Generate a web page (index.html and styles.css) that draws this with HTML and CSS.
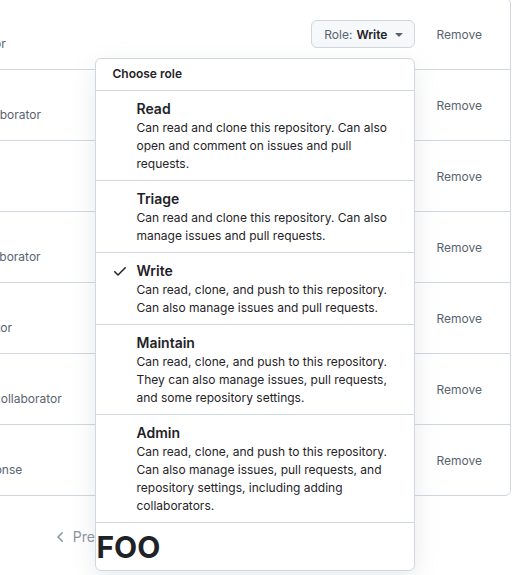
FILE: index.html
```html
<!DOCTYPE html>
<html lang="en">
<head>
    <meta charset="UTF-8">
    <meta name="viewport" content="width=device-width, initial-scale=1.0">
    <title>Manage access</title>
    <link rel="stylesheet" href="styles.css">
</head>
<body>
    <div class="page">
        <ul class="member-list">
            <li class="member-row">
                <div class="member-info">
                    <span class="avatar"></span>
                    <div class="member-text">
                        <span class="member-name">octo</span>
                        <span class="member-sub">Collaborator</span>
                    </div>
                </div>
                <div class="member-actions">
                    <div class="role-menu">
                        <button class="role-btn">
                            <span class="role-label">Role:</span>
                            <span class="role-value">Write</span>
                            <svg class="caret" width="16" height="16" viewBox="0 0 16 16"><path d="m4.427 7.427 3.396 3.396a.25.25 0 0 0 .354 0l3.396-3.396A.25.25 0 0 0 11.396 7H4.604a.25.25 0 0 0-.177.427Z"/></svg>
                        </button>

                        <div class="select-menu">
                            <div class="select-header">Choose role</div>
                            <div class="select-item">
                                <span class="check"></span>
                                <div>
                                    <div class="item-title">Read</div>
                                    <div class="item-desc">Can read and clone this repository. Can also open and comment on issues and pull requests.</div>
                                </div>
                            </div>
                            <div class="select-item">
                                <span class="check"></span>
                                <div>
                                    <div class="item-title">Triage</div>
                                    <div class="item-desc">Can read and clone this repository. Can also manage issues and pull requests.</div>
                                </div>
                            </div>
                            <div class="select-item">
                                <span class="check">
                                    <svg width="16" height="16" viewBox="0 0 16 16"><path d="M13.78 4.22a.75.75 0 0 1 0 1.06l-7.25 7.25a.75.75 0 0 1-1.06 0L2.220 9.28a.751.751 0 0 1 .018-1.042.751.751 0 0 1 1.042-.018L6 10.94l6.72-6.720a.75.75 0 0 1 1.06 0Z"/></svg>
                                </span>
                                <div>
                                    <div class="item-title">Write</div>
                                    <div class="item-desc">Can read, clone, and push to this repository. Can also manage issues and pull requests.</div>
                                </div>
                            </div>
                            <div class="select-item">
                                <span class="check"></span>
                                <div>
                                    <div class="item-title">Maintain</div>
                                    <div class="item-desc">Can read, clone, and push to this repository. They can also manage issues, pull requests, and some repository settings.</div>
                                </div>
                            </div>
                            <div class="select-item">
                                <span class="check"></span>
                                <div>
                                    <div class="item-title">Admin</div>
                                    <div class="item-desc">Can read, clone, and push to this repository. Can also manage issues, pull requests, and repository settings, including adding collaborators.</div>
                                </div>
                            </div>
                            <div class="select-footer">FOO</div>
                        </div>
                    </div>
                    <button class="remove-btn">Remove</button>
                </div>
            </li>
            <li class="member-row">
                <div class="member-info">
                    <span class="avatar"></span>
                    <div class="member-text">
                        <span class="member-name">hubot</span>
                        <span class="member-sub">Direct collaborator</span>
                    </div>
                </div>
                <div class="member-actions">
                    <button class="role-btn"><span class="role-label">Role:</span> <span class="role-value">Read</span></button>
                    <button class="remove-btn">Remove</button>
                </div>
            </li>
            <li class="member-row">
                <div class="member-info">
                    <span class="avatar"></span>
                    <div class="member-text">
                        <span class="member-name">monalisa</span>
                        <span class="member-sub"></span>
                    </div>
                </div>
                <div class="member-actions">
                    <button class="role-btn"><span class="role-label">Role:</span> <span class="role-value">Read</span></button>
                    <button class="remove-btn">Remove</button>
                </div>
            </li>
            <li class="member-row">
                <div class="member-info">
                    <span class="avatar"></span>
                    <div class="member-text">
                        <span class="member-name">mona</span>
                        <span class="member-sub">Guest collaborator</span>
                    </div>
                </div>
                <div class="member-actions">
                    <button class="role-btn"><span class="role-label">Role:</span> <span class="role-value">Read</span></button>
                    <button class="remove-btn">Remove</button>
                </div>
            </li>
            <li class="member-row">
                <div class="member-info">
                    <span class="avatar"></span>
                    <div class="member-text">
                        <span class="member-name">defunkt</span>
                        <span class="member-sub">Administrator</span>
                    </div>
                </div>
                <div class="member-actions">
                    <button class="role-btn"><span class="role-label">Role:</span> <span class="role-value">Admin</span></button>
                    <button class="remove-btn">Remove</button>
                </div>
            </li>
            <li class="member-row">
                <div class="member-info">
                    <span class="avatar"></span>
                    <div class="member-text">
                        <span class="member-name">pjhyett</span>
                        <span class="member-sub">Accepted collaborator</span>
                    </div>
                </div>
                <div class="member-actions">
                    <button class="role-btn"><span class="role-label">Role:</span> <span class="role-value">Write</span></button>
                    <button class="remove-btn">Remove</button>
                </div>
            </li>
            <li class="member-row">
                <div class="member-info">
                    <span class="avatar"></span>
                    <div class="member-text">
                        <span class="member-name">mojombo</span>
                        <span class="member-sub">Email response</span>
                    </div>
                </div>
                <div class="member-actions">
                    <button class="role-btn"><span class="role-label">Role:</span> <span class="role-value">Read</span></button>
                    <button class="remove-btn">Remove</button>
                </div>
            </li>
        </ul>

        <nav class="pagination">
            <span class="page-link disabled">
                <svg width="16" height="16" viewBox="0 0 16 16"><path d="M9.78 12.78a.75.75 0 0 1-1.06 0L4.47 8.53a.75.75 0 0 1 0-1.06l4.25-4.25a.751.751 0 0 1 1.042.018.751.751 0 0 1 .018 1.042L6.060 8l3.72 3.72a.75.75 0 0 1 0 1.06Z"/></svg>
                Previous
            </span>
            <span class="page-link current">1</span>
            <span class="page-link">2</span>
            <span class="page-link">3</span>
            <span class="page-link">4</span>
            <span class="page-link">5</span>
            <span class="page-link">Next</span>
        </nav>
    </div>
</body>
</html>
```

FILE: styles.css
```css
/* Base */
body {
    margin: 0;
    min-height: 575px;
    font-family: Inter, 'Liberation Sans', sans-serif;
    font-size: 12px;
    color: #1f2328;
    background: #fff;
}

.page {
    width: 624px;
    margin-left: -113px;
    margin-top: -2px;
}

/* Member list */
.member-list {
    list-style: none;
    margin: 0;
    padding: 0;
    border: 1px solid #d0d7de;
    border-radius: 6px;
}

.member-row {
    display: flex;
    align-items: center;
    justify-content: space-between;
    padding: 16px;
    border-bottom: 1px solid #d0d7de;
}

.member-row:last-child {
    border-bottom: none;
}

.member-info {
    display: flex;
    align-items: center;
    gap: 12px;
}

.avatar {
    width: 20px;
    height: 20px;
    border-radius: 50%;
    background: #eaeef2;
}

.member-text {
    display: flex;
    flex-direction: column;
}

.member-name {
    font-size: 14px;
    line-height: 20px;
    font-weight: 600;
    height: 20px;
}

.member-sub {
    color: #59636e;
    line-height: 18px;
    height: 18px;
}

.member-actions {
    display: flex;
    align-items: center;
    gap: 9px;
}

.role-menu {
    position: relative;
}

/* Buttons */
button {
    font-family: inherit;
    font-size: 12px;
    cursor: pointer;
}

.role-btn {
    display: flex;
    align-items: center;
    gap: 4px;
    height: 28px;
    padding: 0 7px 0 12px;
    background: #f6f8fa;
    border: 1px solid #d0d7de;
    border-radius: 6px;
    color: #1f2328;
}

.role-label {
    color: #59636e;
}

.role-value {
    font-weight: 600;
}

.caret {
    fill: #59636e;
}

.remove-btn {
    height: 28px;
    padding: 0 12px;
    background: none;
    border: none;
    color: #59636e;
}

/* Role select menu */
.select-menu {
    position: absolute;
    top: 38px;
    right: 0;
    width: 320px;
    box-sizing: border-box;
    background: #fff;
    border: 1px solid #d0d7de;
    border-radius: 6px;
    box-shadow: 0 8px 24px rgba(140, 149, 159, 0.2);
    z-index: 10;
}

.select-header {
    padding: 6px 16px 7px;
    line-height: 18px;
    font-weight: 600;
    border-bottom: 1px solid #d0d7de;
}

.select-item {
    display: flex;
    gap: 8px;
    padding: 8px 16px 7px;
    border-bottom: 1px solid #d0d7de;
}

.check {
    flex: none;
    width: 16px;
    height: 20px;
    display: flex;
    align-items: center;
}

.check svg {
    fill: #1f2328;
}

.item-title {
    font-size: 14px;
    line-height: 20px;
    font-weight: 600;
}

.item-desc {
    line-height: 18px;
}

.select-footer {
    font-size: 30px;
    font-weight: 700;
    line-height: 45px;
    height: 47px;
    padding-top: 2px;
    box-sizing: border-box;
}

/* Pagination */
.pagination {
    display: flex;
    justify-content: center;
    gap: 4px;
    margin-top: 26px;
}

.page-link {
    display: flex;
    align-items: center;
    gap: 4px;
    padding: 5px 10px;
    line-height: 20px;
    font-size: 14px;
    color: #1f2328;
}

.page-link svg {
    fill: currentColor;
}

.page-link.disabled {
    color: #8c959f;
}

.page-link.current {
    background: #0969da;
    color: #fff;
    border-radius: 6px;
}
```
